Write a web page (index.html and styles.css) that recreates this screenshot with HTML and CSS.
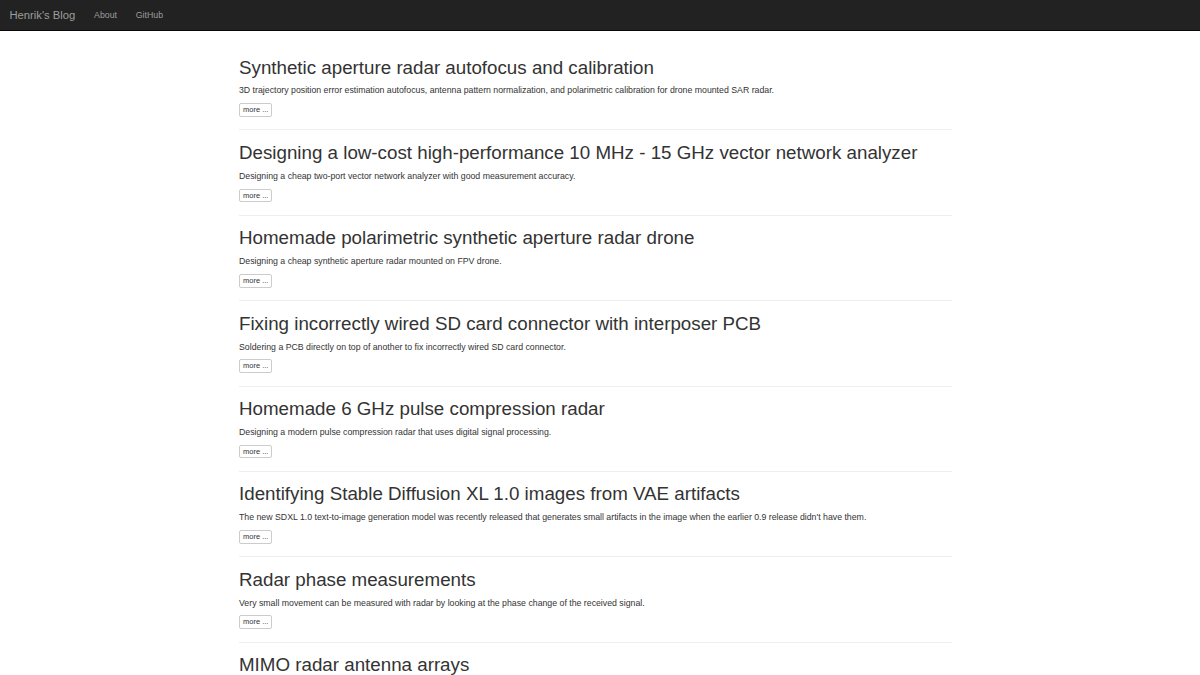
FILE: index.html
```html
<!DOCTYPE html>
<html lang="en">
<head>
  <meta charset="UTF-8" />
  <title>Henrik's Blog</title>
  <link rel="stylesheet" href="styles.css">
</head>
<body>

  <nav class="navbar">
    <a class="brand" href="#">Henrik's Blog</a>
    <ul class="nav">
      <li><a href="#">About</a></li>
      <li><a href="#">GitHub</a></li>
    </ul>
  </nav>

  <div class="container">

    <div class="post">
      <h2>Synthetic aperture radar autofocus and calibration</h2>
      <p>3D trajectory position error estimation autofocus, antenna pattern normalization, and polarimetric calibration for drone mounted SAR radar.</p>
      <a class="more" href="#">more ...</a>
    </div>
    <hr>

    <div class="post">
      <h2>Designing a low-cost high-performance 10 MHz - 15 GHz vector network analyzer</h2>
      <p>Designing a cheap two-port vector network analyzer with good measurement accuracy.</p>
      <a class="more" href="#">more ...</a>
    </div>
    <hr>

    <div class="post">
      <h2>Homemade polarimetric synthetic aperture radar drone</h2>
      <p>Designing a cheap synthetic aperture radar mounted on FPV drone.</p>
      <a class="more" href="#">more ...</a>
    </div>
    <hr>

    <div class="post">
      <h2>Fixing incorrectly wired SD card connector with interposer PCB</h2>
      <p>Soldering a PCB directly on top of another to fix incorrectly wired SD card connector.</p>
      <a class="more" href="#">more ...</a>
    </div>
    <hr>

    <div class="post">
      <h2>Homemade 6 GHz pulse compression radar</h2>
      <p>Designing a modern pulse compression radar that uses digital signal processing.</p>
      <a class="more" href="#">more ...</a>
    </div>
    <hr>

    <div class="post">
      <h2>Identifying Stable Diffusion XL 1.0 images from VAE artifacts</h2>
      <p>The new SDXL 1.0 text-to-image generation model was recently released that generates small artifacts in the image when the earlier 0.9 release didn't have them.</p>
      <a class="more" href="#">more ...</a>
    </div>
    <hr>

    <div class="post">
      <h2>Radar phase measurements</h2>
      <p>Very small movement can be measured with radar by looking at the phase change of the received signal.</p>
      <a class="more" href="#">more ...</a>
    </div>
    <hr>

    <div class="post">
      <h2>MIMO radar antenna arrays</h2>
      <p>Increasing the angular resolution of radar with multiple transmit and receive antennas.</p>
      <a class="more" href="#">more ...</a>
    </div>
    <hr>

    <div class="post">
      <h2>Third version of homemade 6 GHz FMCW radar</h2>
      <p>Improved radar with better range, faster sweeps and USB 3.0 interface.</p>
      <a class="more" href="#">more ...</a>
    </div>
    <hr>

    <div class="post">
      <h2>Synthetic aperture radar imaging from a car</h2>
      <p>Imaging the surroundings with radar mounted on a moving car.</p>
      <a class="more" href="#">more ...</a>
    </div>
    <hr>

    <div class="post">
      <h2>GaN synchronous buck converter</h2>
      <p>High frequency DC-DC converter using gallium nitride transistors.</p>
      <a class="more" href="#">more ...</a>
    </div>
    <hr>

    <div class="post">
      <h2>Measuring PCB substrate permittivity</h2>
      <p>Using a ring resonator to measure the dielectric constant of FR-4 at microwave frequencies.</p>
      <a class="more" href="#">more ...</a>
    </div>
    <hr>

    <div class="post">
      <h2>Homemade phased array radar</h2>
      <p>Electronically steered beam with an array of receivers.</p>
      <a class="more" href="#">more ...</a>
    </div>
    <hr>

    <div class="post">
      <h2>Microstrip patch antenna design</h2>
      <p>Designing and measuring a simple patch antenna for 5.8 GHz.</p>
      <a class="more" href="#">more ...</a>
    </div>
    <hr>

    <div class="post">
      <h2>Cheap homemade 30 m range 6 GHz FMCW radar</h2>
      <p>Second version of the radar with better sensitivity and lower cost.</p>
      <a class="more" href="#">more ...</a>
    </div>
    <hr>

    <div class="post">
      <h2>Solar MPPT charger</h2>
      <p>Maximum power point tracking charge controller for small solar panels.</p>
      <a class="more" href="#">more ...</a>
    </div>
    <hr>

    <div class="post">
      <h2>Inductance and capacitance meter</h2>
      <p>Simple LC meter built around a microcontroller and an oscillator.</p>
      <a class="more" href="#">more ...</a>
    </div>
    <hr>

    <div class="post">
      <h2>Homemade 6 GHz FMCW radar</h2>
      <p>Designing a frequency modulated continuous wave radar from scratch.</p>
      <a class="more" href="#">more ...</a>
    </div>
    <hr>

    <div class="post">
      <h2>Brushless motor controller</h2>
      <p>Sensorless field oriented control for small BLDC motors.</p>
      <a class="more" href="#">more ...</a>
    </div>
    <hr>

    <div class="post">
      <h2>Quadcopter flight controller</h2>
      <p>Attitude estimation and PID control on a custom flight controller board.</p>
      <a class="more" href="#">more ...</a>
    </div>
    <hr>

    <div class="post">
      <h2>Software defined radio receiver</h2>
      <p>Direct conversion receiver with a sound card as the ADC.</p>
      <a class="more" href="#">more ...</a>
    </div>
    <hr>

    <div class="post">
      <h2>Class-D audio amplifier</h2>
      <p>Efficient switching amplifier with feedback after the output filter.</p>
      <a class="more" href="#">more ...</a>
    </div>
    <hr>

    <div class="post">
      <h2>Boost converter for LED driver</h2>
      <p>Constant current LED driver with a small boost converter.</p>
      <a class="more" href="#">more ...</a>
    </div>
    <hr>

    <div class="post">
      <h2>Reflow oven controller</h2>
      <p>Turning a toaster oven into a reflow oven for soldering surface mount parts.</p>
      <a class="more" href="#">more ...</a>
    </div>
    <hr>

    <div class="post">
      <h2>Ultrasonic range finder</h2>
      <p>Measuring distance with cheap ultrasonic transducers.</p>
      <a class="more" href="#">more ...</a>
    </div>
    <hr>

    <div class="post">
      <h2>Coilgun</h2>
      <p>Accelerating a projectile with a pulsed electromagnet.</p>
      <a class="more" href="#">more ...</a>
    </div>
    <hr>

    <div class="post">
      <h2>Tesla coil</h2>
      <p>Dual resonant solid state Tesla coil.</p>
      <a class="more" href="#">more ...</a>
    </div>
    <hr>

    <div class="post">
      <h2>Nixie tube clock</h2>
      <p>Clock with nixie tubes and a high voltage power supply.</p>
      <a class="more" href="#">more ...</a>
    </div>
    <hr>

    <div class="post">
      <h2>LED cube</h2>
      <p>8x8x8 LED cube driven by shift registers.</p>
      <a class="more" href="#">more ...</a>
    </div>
    <hr>

    <div class="post">
      <h2>Oscilloscope clock</h2>
      <p>Drawing a clock face on an analog oscilloscope screen.</p>
      <a class="more" href="#">more ...</a>
    </div>
    <hr>

    <div class="post">
      <h2>Line following robot</h2>
      <p>Small robot that follows a black line with infrared sensors.</p>
      <a class="more" href="#">more ...</a>
    </div>
    <hr>

    <div class="post">
      <h2>Bench power supply</h2>
      <p>Adjustable linear power supply with current limiting.</p>
      <a class="more" href="#">more ...</a>
    </div>
    <hr>

    <div class="post">
      <h2>Function generator</h2>
      <p>DDS based function generator with sine, square and triangle outputs.</p>
      <a class="more" href="#">more ...</a>
    </div>
    <hr>

    <div class="post">
      <h2>Electronic load</h2>
      <p>Constant current electronic load for testing power supplies.</p>
      <a class="more" href="#">more ...</a>
    </div>
    <hr>

    <div class="post">
      <h2>Thermal camera</h2>
      <p>Low resolution thermal imager with a thermopile array.</p>
      <a class="more" href="#">more ...</a>
    </div>
    <hr>

    <div class="post">
      <h2>Wireless temperature sensor</h2>
      <p>Battery powered sensor node with a low power radio.</p>
      <a class="more" href="#">more ...</a>
    </div>
    <hr>

    <div class="post">
      <h2>Stepper motor driver</h2>
      <p>Microstepping driver for bipolar stepper motors.</p>
      <a class="more" href="#">more ...</a>
    </div>
    <hr>

    <div class="post">
      <h2>Metal detector</h2>
      <p>Pulse induction metal detector.</p>
      <a class="more" href="#">more ...</a>
    </div>
    <hr>

    <div class="post">
      <h2>Geiger counter</h2>
      <p>Counting radiation with a Geiger-Muller tube.</p>
      <a class="more" href="#">more ...</a>
    </div>
    <hr>

    <div class="post">
      <h2>Theremin</h2>
      <p>Musical instrument played without touching it.</p>
      <a class="more" href="#">more ...</a>
    </div>
    <hr>

    <div class="post">
      <h2>Spot welder</h2>
      <p>Battery tab spot welder from a microwave oven transformer.</p>
      <a class="more" href="#">more ...</a>
    </div>
    <hr>

    <div class="post">
      <h2>Logic analyzer</h2>
      <p>Cheap logic analyzer with a microcontroller and USB.</p>
      <a class="more" href="#">more ...</a>
    </div>
    <hr>

    <div class="post">
      <h2>Audio spectrum analyzer</h2>
      <p>Real time FFT display on an LED matrix.</p>
      <a class="more" href="#">more ...</a>
    </div>
    <hr>

    <div class="post">
      <h2>Capacitive touch keyboard</h2>
      <p>Reading touch pads with a microcontroller and no extra parts.</p>
      <a class="more" href="#">more ...</a>
    </div>
    <hr>

    <div class="post">
      <h2>Motion activated lights</h2>
      <p>PIR sensor controlled lighting for the hallway.</p>
      <a class="more" href="#">more ...</a>
    </div>
    <hr>

    <div class="post">
      <h2>Water level sensor</h2>
      <p>Measuring the water level of a tank with capacitive sensing.</p>
      <a class="more" href="#">more ...</a>
    </div>
    <hr>

    <div class="post">
      <h2>Infrared remote decoder</h2>
      <p>Decoding TV remote signals with a microcontroller.</p>
      <a class="more" href="#">more ...</a>
    </div>
    <hr>

    <div class="post">
      <h2>Programmable LED strip</h2>
      <p>Animations for addressable RGB LED strips.</p>
      <a class="more" href="#">more ...</a>
    </div>
    <hr>

    <div class="post">
      <h2>First blog post</h2>
      <p>Hello world.</p>
      <a class="more" href="#">more ...</a>
    </div>
    <hr>

  </div>

</body>
</html>
```

FILE: styles.css
```css
body {
  margin: 0;
  font-family: "Liberation Sans", Arial, sans-serif;
  font-size: 8.75px;
  line-height: 1.43;
  color: #333;
  background: #fff;
}

a {
  text-decoration: none;
}

.navbar {
  display: flex;
  align-items: center;
  height: 30px;
  background-color: #222;
  border-bottom: 1px solid #080808;
}

.brand {
  padding: 0 9.4px;
  font-size: 11.25px;
  line-height: 12.5px;
  color: #9d9d9d;
}

.nav {
  display: flex;
  margin: 0;
  padding: 0;
  list-style: none;
}

.nav a {
  display: block;
  padding: 0 9.4px;
  font-size: 8.75px;
  line-height: 12.5px;
  color: #9d9d9d;
}

/* post list column */
.container {
  width: 712.5px;
  margin-left: 239px;
  padding-top: 14px;
}

h2 {
  margin: 12.5px 0 6.25px;
  font-size: 18.75px;
  font-weight: 500;
  line-height: 1.1;
}

p {
  margin: 0 0 6.25px;
  line-height: 12.5px;
}

.more {
  display: block;
  width: fit-content;
  padding: 1px 3px;
  font-size: 7.5px;
  line-height: 9.75px;
  color: #333;
  background-color: #fff;
  border: 1px solid #ccc;
  border-radius: 2px;
}

hr {
  margin: 12.5px 0;
  border: 0;
  border-top: 1px solid #eee;
}
```
